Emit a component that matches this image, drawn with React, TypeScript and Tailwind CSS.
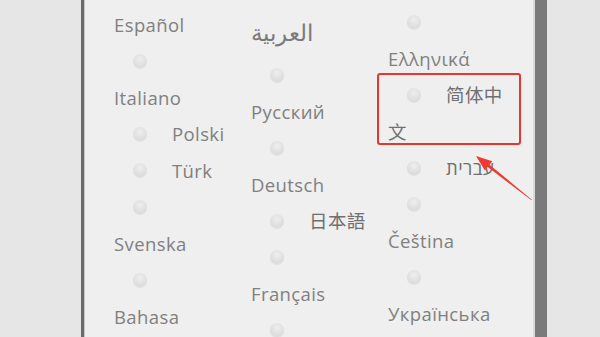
type Opt = {
  label?: string;
  wrap?: boolean;
  radio?: boolean;
  className?: string;
};

const columns: { pad: string; items: Opt[] }[] = [
  {
    pad: "pt-[6.75px]",
    items: [
      { label: "Español", radio: false },
      { label: "Italiano", wrap: true },
      { label: "Polski" },
      { label: "Türk" },
      { label: "Svenska", wrap: true },
      { label: "Bahasa", wrap: true },
    ],
  },
  {
    pad: "pt-[18.75px]",
    items: [
      { label: "العربية", radio: false, className: "relative -top-[5px] text-[23px] text-[#7a7a7a]" },
      { label: "Русский", wrap: true },
      { label: "Deutsch", wrap: true },
      { label: "日本語", className: "text-[#707070]" },
      { label: "Français", wrap: true },
      { label: "", wrap: true },
    ],
  },
  {
    pad: "pt-[4.25px]",
    items: [
      { label: "Ελληνικά", wrap: true },
      { label: "简体中文", className: "text-[#707070]" },
      { label: "עברית", className: "text-[#707070]" },
      { label: "Čeština", wrap: true },
      { label: "Українська", wrap: true },
    ],
  },
];

function Radio() {
  return (
    <span className="relative -top-[2.5px] ml-[19px] mr-[25px] inline-block h-[14px] w-[14px] rounded-full bg-[radial-gradient(circle_at_50%_35%,#eeeeee,#d4d4d4)] align-middle shadow-[0_1px_1px_rgba(0,0,0,0.06)]" />
  );
}

function Option({ label, wrap, radio = true, className }: Opt) {
  return (
    <div className="w-[116px] leading-[36.5px]">
      {radio && <Radio />}
      {wrap && <br />}
      <span className={className}>{label}</span>
    </div>
  );
}

export default function App() {
  return (
    <div className="relative flex h-[337px] w-[600px] overflow-hidden bg-[#e6e6e6] font-['Open_Sans','Noto_Sans_CJK_SC',sans-serif] text-[18.5px] tracking-[0.4px] text-[#808080]">
      <div className="w-[81px] shrink-0" />
      <div className="w-[3px] shrink-0 bg-[#6b6b6b]" />
      <div className="flex w-[451px] shrink-0 border-l border-r-2 border-l-[#c9c9c9] border-r-[#d9d9d9] bg-[#efefef] pl-[29px]">
        {columns.map((col, i) => (
          <div key={i} className={`w-[137px] shrink-0 ${col.pad}`}>
            {col.items.map((it, j) => (
              <Option key={j} {...it} />
            ))}
          </div>
        ))}
      </div>
      <div className="w-[12px] shrink-0 bg-[#7a7a7a]" />
      <div className="flex-1" />

      {/* highlight */}
      <div className="absolute left-[377px] top-[73px] h-[72px] w-[144px] rounded-[3px] border-2 border-[#e8352f]" />
      <svg className="absolute left-0 top-0" width="600" height="337" viewBox="0 0 600 337">
        <polygon
          points="476,156 484.9,170.6 487.7,167.1 531.5,200.3 531.9,199.7 489.5,164.7 492.3,161.2"
          fill="#ef3a2f"
        />
      </svg>
    </div>
  );
}
